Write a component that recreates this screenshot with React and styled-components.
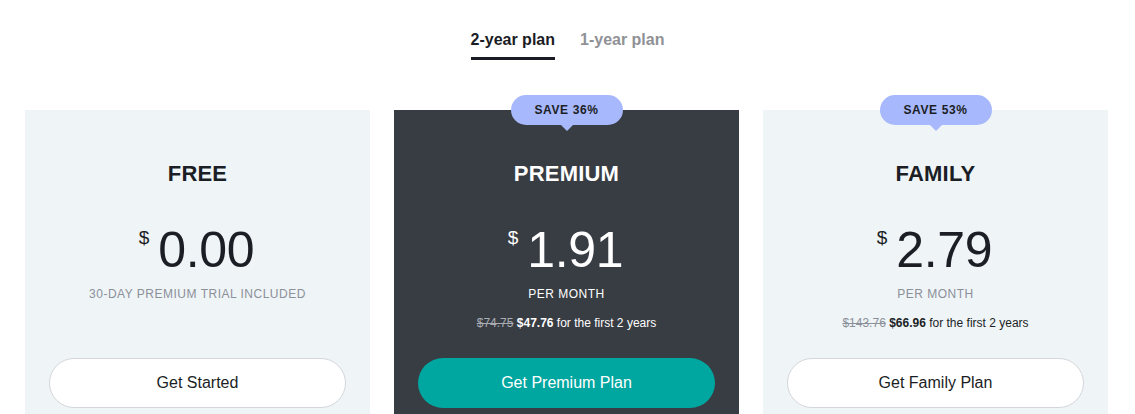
import React from "react";
import styled, { createGlobalStyle } from "styled-components";

const Global = createGlobalStyle`
  html, body { margin: 0; padding: 0; background: #fff; }
  body { font-family: "Liberation Sans", Arial, sans-serif; overflow: hidden; }
`;

const Page = styled.div`
  width: 1135px;
  height: 414px;
  overflow: hidden;
`;

const Tabs = styled.div`
  display: flex;
  justify-content: center;
  gap: 25px;
  padding-top: 30px;
`;

const Tab = styled.div`
  font-size: 16px;
  font-weight: 700;
  color: ${(p) => (p.$active ? "#1a1c24" : "#8f9196")};
  padding-bottom: 8px;
  border-bottom: 3px solid ${(p) => (p.$active ? "#1a1c24" : "transparent")};
  line-height: 19px;
`;

const Grid = styled.div`
  display: grid;
  grid-template-columns: repeat(3, 345px);
  gap: 24px;
  padding: 0 25px;
  margin-top: 50px;
`;

const Card = styled.div`
  position: relative;
  background: ${(p) => (p.$dark ? "#383c43" : "#eff4f7")};
  color: ${(p) => (p.$dark ? "#fff" : "#1b1e25")};
  height: 330px;
  display: flex;
  flex-direction: column;
  align-items: center;
  padding-top: 52px;
  box-sizing: border-box;
`;

const Badge = styled.div`
  position: absolute;
  top: -15px;
  left: 50%;
  transform: translateX(-50%);
  width: 112px;
  height: 30px;
  border-radius: 15px;
  background: #a8b8fc;
  color: #1b1e25;
  font-size: 12px;
  font-weight: 700;
  letter-spacing: 0.6px;
  display: flex;
  align-items: center;
  justify-content: center;
  &::after {
    content: "";
    position: absolute;
    bottom: -6px;
    left: 50%;
    margin-left: -6px;
    border-left: 6px solid transparent;
    border-right: 6px solid transparent;
    border-top: 6px solid #a8b8fc;
  }
`;

const Title = styled.div`
  font-size: 22px;
  font-weight: 700;
  line-height: 24px;
  letter-spacing: 0.2px;
`;

const Price = styled.div`
  display: flex;
  align-items: flex-start;
  margin-top: 39px;
  margin-left: -2px;
`;

const Currency = styled.span`
  font-size: 19px;
  line-height: 19px;
  margin-top: 3px;
  margin-right: 9px;
`;

const Amount = styled.span`
  font-size: 50px;
  line-height: 50px;
  letter-spacing: -0.3px;
`;

const Caption = styled.div`
  font-size: 12px;
  letter-spacing: 0.5px;
  text-transform: uppercase;
  color: ${(p) => (p.$dark ? "#fff" : "#8b9099")};
  margin-top: 12px;
  line-height: 14px;
`;

const Note = styled.div`
  font-size: 12px;
  line-height: 14px;
  margin-top: 15px;
  color: ${(p) => (p.$dark ? "#fff" : "#1b1e25")};
  s {
    color: ${(p) => (p.$dark ? "#a9adb3" : "#8b9099")};
  }
  b { font-weight: 700; }
`;

const Spacer = styled.div`
  flex: none;
  height: ${(p) => p.$h}px;
`;

const Button = styled.button`
  width: 297px;
  height: 50px;
  border-radius: 25px;
  font-family: "Liberation Sans", Arial, sans-serif;
  font-size: 16px;
  cursor: pointer;
  background: ${(p) => (p.$primary ? "#00a6a0" : "#fff")};
  color: ${(p) => (p.$primary ? "#fff" : "#1b1e25")};
  border: ${(p) => (p.$primary ? "none" : "1px solid #d3d6da")};
`;

const plans = [
  {
    name: "FREE",
    amount: "0.00",
    caption: "30-DAY PREMIUM TRIAL INCLUDED",
    cta: "Get Started",
  },
  {
    name: "PREMIUM",
    amount: "1.91",
    caption: "PER MONTH",
    old: "$74.75",
    now: "$47.76",
    badge: "SAVE 36%",
    dark: true,
    cta: "Get Premium Plan",
  },
  {
    name: "FAMILY",
    amount: "2.79",
    caption: "PER MONTH",
    old: "$143.76",
    now: "$66.96",
    badge: "SAVE 53%",
    cta: "Get Family Plan",
  },
];

export default function App() {
  return (
    <Page>
      <Global />
      <Tabs>
        <Tab $active>2-year plan</Tab>
        <Tab>1-year plan</Tab>
      </Tabs>
      <Grid>
        {plans.map((p) => (
          <Card key={p.name} $dark={p.dark}>
            {p.badge && <Badge>{p.badge}</Badge>}
            <Title>{p.name}</Title>
            <Price>
              <Currency>$</Currency>
              <Amount>{p.amount}</Amount>
            </Price>
            <Caption $dark={p.dark}>{p.caption}</Caption>
            {p.old ? (
              <Note $dark={p.dark}>
                <s>{p.old}</s> <b>{p.now}</b> for the first 2 years
              </Note>
            ) : null}
            <Spacer $h={p.old ? 28 : 57} />
            <Button $primary={p.dark}>{p.cta}</Button>
          </Card>
        ))}
      </Grid>
    </Page>
  );
}
